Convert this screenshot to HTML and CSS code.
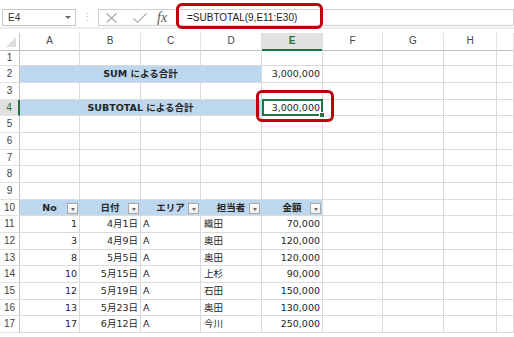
FILE: index.html
```html
<!DOCTYPE html>
<html lang="ja">
<head>
    <meta charset="UTF-8">
    <title>SUBTOTAL</title>
    <link rel="stylesheet" href="styles.css">
</head>
<body>

    <!-- Formula bar -->
    <div class="toolbar">
        <div class="namebox"><span>E4</span><span class="arrow"></span></div>
        <div class="sep">&#8942;</div>
        <div class="fxbox">
            <svg class="ico-x" width="11" height="10" viewBox="0 0 11 10"><path d="M0.5 0.5L10.5 9.5M10.5 0.5L0.5 9.5" stroke="#a8a8a8" stroke-width="1.1" fill="none"/></svg>
            <svg class="ico-ok" width="14" height="10" viewBox="0 0 14 10"><path d="M0.5 5.5L4.5 9.3L13.5 0.5" stroke="#a8a8a8" stroke-width="1.1" fill="none"/></svg>
            <span class="fx">fx</span>
        </div>
        <div class="formula">=SUBTOTAL(9,E11:E30)</div>
    </div>

    <!-- Sheet -->
    <div class="sheet">
        <div class="row head">
            <div class="corner"></div>
            <div class="ch">A</div><div class="ch">B</div><div class="ch">C</div><div class="ch">D</div>
            <div class="ch on">E</div><div class="ch">F</div><div class="ch">G</div><div class="ch">H</div><div class="ch"></div>
        </div>

        <div class="row">
            <div class="rh">1</div>
            <div class="c"></div><div class="c"></div><div class="c"></div><div class="c"></div><div class="c"></div><div class="c"></div><div class="c"></div><div class="c"></div><div class="c"></div>
        </div>
        <div class="row">
            <div class="rh">2</div>
            <div class="c fill bold mid merge">SUM による合計</div>
            <div class="c num">3,000,000</div><div class="c"></div><div class="c"></div><div class="c"></div><div class="c"></div>
        </div>
        <div class="row">
            <div class="rh">3</div>
            <div class="c"></div><div class="c"></div><div class="c"></div><div class="c"></div><div class="c"></div><div class="c"></div><div class="c"></div><div class="c"></div><div class="c"></div>
        </div>
        <div class="row">
            <div class="rh on">4</div>
            <div class="c fill bold mid merge">SUBTOTAL による合計</div>
            <div class="c num sel">3,000,000</div><div class="c"></div><div class="c"></div><div class="c"></div><div class="c"></div>
        </div>
        <div class="row">
            <div class="rh">5</div>
            <div class="c"></div><div class="c"></div><div class="c"></div><div class="c"></div><div class="c"></div><div class="c"></div><div class="c"></div><div class="c"></div><div class="c"></div>
        </div>
        <div class="row">
            <div class="rh">6</div>
            <div class="c"></div><div class="c"></div><div class="c"></div><div class="c"></div><div class="c"></div><div class="c"></div><div class="c"></div><div class="c"></div><div class="c"></div>
        </div>
        <div class="row">
            <div class="rh">7</div>
            <div class="c"></div><div class="c"></div><div class="c"></div><div class="c"></div><div class="c"></div><div class="c"></div><div class="c"></div><div class="c"></div><div class="c"></div>
        </div>
        <div class="row">
            <div class="rh">8</div>
            <div class="c"></div><div class="c"></div><div class="c"></div><div class="c"></div><div class="c"></div><div class="c"></div><div class="c"></div><div class="c"></div><div class="c"></div>
        </div>
        <div class="row">
            <div class="rh">9</div>
            <div class="c"></div><div class="c"></div><div class="c"></div><div class="c"></div><div class="c"></div><div class="c"></div><div class="c"></div><div class="c"></div><div class="c"></div>
        </div>

        <!-- Table header -->
        <div class="row">
            <div class="rh">10</div>
            <div class="c fill bold mid">No<span class="flt"></span></div>
            <div class="c fill bold mid">日付<span class="flt"></span></div>
            <div class="c fill bold mid">エリア<span class="flt"></span></div>
            <div class="c fill bold mid">担当者<span class="flt"></span></div>
            <div class="c fill bold mid last">金額<span class="flt"></span></div>
            <div class="c"></div><div class="c"></div><div class="c"></div><div class="c"></div>
        </div>

        <div class="row">
            <div class="rh">11</div>
            <div class="c num">1</div><div class="c num">4月1日</div><div class="c">A</div><div class="c name">織田</div><div class="c num">70,000</div>
            <div class="c"></div><div class="c"></div><div class="c"></div><div class="c"></div>
        </div>
        <div class="row">
            <div class="rh">12</div>
            <div class="c num">3</div><div class="c num">4月9日</div><div class="c">A</div><div class="c name">奥田</div><div class="c num">120,000</div>
            <div class="c"></div><div class="c"></div><div class="c"></div><div class="c"></div>
        </div>
        <div class="row">
            <div class="rh">13</div>
            <div class="c num">8</div><div class="c num">5月5日</div><div class="c">A</div><div class="c name">奥田</div><div class="c num">120,000</div>
            <div class="c"></div><div class="c"></div><div class="c"></div><div class="c"></div>
        </div>
        <div class="row">
            <div class="rh">14</div>
            <div class="c num">10</div><div class="c num">5月15日</div><div class="c">A</div><div class="c name">上杉</div><div class="c num">90,000</div>
            <div class="c"></div><div class="c"></div><div class="c"></div><div class="c"></div>
        </div>
        <div class="row">
            <div class="rh">15</div>
            <div class="c num">12</div><div class="c num">5月19日</div><div class="c">A</div><div class="c name">石田</div><div class="c num">150,000</div>
            <div class="c"></div><div class="c"></div><div class="c"></div><div class="c"></div>
        </div>
        <div class="row">
            <div class="rh">16</div>
            <div class="c num">13</div><div class="c num">5月23日</div><div class="c">A</div><div class="c name">奥田</div><div class="c num">130,000</div>
            <div class="c"></div><div class="c"></div><div class="c"></div><div class="c"></div>
        </div>
        <div class="row">
            <div class="rh">17</div>
            <div class="c num">17</div><div class="c num">6月12日</div><div class="c">A</div><div class="c name">今川</div><div class="c num">250,000</div>
            <div class="c"></div><div class="c"></div><div class="c"></div><div class="c"></div>
        </div>
    </div>

    <!-- Red call-outs -->
    <div class="callout formula-mark"></div>
    <div class="callout cell-mark"></div>

</body>
</html>
```

FILE: styles.css
```css
body {
    margin: 0;
    background-color: #fff;
    font-family: "DejaVu Sans", "Noto Sans CJK JP", sans-serif;
    color: #262626;
    position: relative;
    height: 337px;
    overflow: hidden;
}

/* formula bar */
.toolbar {
    display: flex;
    align-items: flex-start;
    height: 29px;
    box-sizing: border-box;
    padding: 9px 0 0 2px;
    border-bottom: 2px solid #ececec;
}

.namebox {
    width: 74px;
    height: 17px;
    box-sizing: border-box;
    border: 1px solid #c6c6c6;
    display: flex;
    align-items: center;
    justify-content: space-between;
    padding: 0 4px 0 5px;
    font: 10px "Liberation Sans", sans-serif;
    color: #333;
}

.namebox .arrow {
    border-left: 3px solid transparent;
    border-right: 3px solid transparent;
    border-top: 3px solid #666;
}

.sep {
    width: 22px;
    text-align: center;
    color: #b5b5b5;
    font: 11px "Liberation Sans", sans-serif;
    line-height: 17px;
}

.fxbox {
    display: flex;
    align-items: center;
    width: 79px;
    height: 17px;
    box-sizing: border-box;
    border: 1px solid #d0d0d0;
    border-right: none;
    padding-left: 7px;
}

.ico-x {
    margin-right: 16px;
}

.ico-ok {
    margin-right: 10px;
}

.fx {
    font: italic 14px "Liberation Serif", serif;
    color: #555;
    line-height: 14px;
}

.formula {
    flex: 1;
    height: 17px;
    box-sizing: border-box;
    border: 1px solid #d0d0d0;
    padding-left: 9px;
    font: 10px "Liberation Sans", sans-serif;
    line-height: 15px;
    color: #222;
}

/* sheet */
.sheet {
    margin-top: 4px;
}

.row {
    display: grid;
    grid-template-columns: 20px 60px 61px 60px 61px 61px 60px 61px 53px 1fr;
    height: 16.67px;
}

.c, .rh, .ch, .corner {
    box-sizing: border-box;
    border-bottom: 1px solid #dadada;
    border-right: 1px solid #dadada;
    white-space: nowrap;
    position: relative;
}

.c {
    font-size: 9.5px;
    line-height: 15.67px;
    padding: 0 2px;
}

.rh {
    border-right-color: #c0c0c0;
    border-bottom-color: #e2e2e2;
    text-align: center;
    font: 10px "Liberation Sans", sans-serif;
    line-height: 15.67px;
    color: #444;
}

.rh.on {
    background-color: #e1e1e1;
    color: #217346;
    border-right: 2px solid #217346;
}

.head .ch {
    border-bottom-color: #c0c0c0;
    border-right-color: #e2e2e2;
    text-align: center;
    font: 10px "Liberation Sans", sans-serif;
    line-height: 15.67px;
    color: #444;
}

.head .ch.on {
    background-color: #e1e1e1;
    color: #217346;
    font-weight: bold;
    border-bottom: 2px solid #217346;
}

.corner {
    border-bottom-color: #c0c0c0;
    border-right-color: #c0c0c0;
}

.corner::after {
    content: "";
    position: absolute;
    right: 3px;
    bottom: 3px;
    border-left: 10px solid transparent;
    border-bottom: 10px solid #dcdcdc;
}

.num {
    text-align: right;
}

.mid {
    text-align: center;
}

.bold {
    font-weight: bold;
}

.name {
    padding-left: 3px;
}

.fill {
    background-color: #bdd7ee;
    border-right-color: #bdd7ee;
}

.fill.last {
    border-right-color: #dadada;
}

.merge {
    grid-column: span 4;
    border-right-color: #dadada;
}

/* filter button */
.flt {
    position: absolute;
    right: 1px;
    top: 3px;
    width: 11px;
    height: 11px;
    box-sizing: border-box;
    border: 1px solid #a9a9a9;
    background: linear-gradient(#fff, #ededed);
}

.flt::after {
    content: "";
    position: absolute;
    left: 2.5px;
    top: 4px;
    border-left: 2.5px solid transparent;
    border-right: 2.5px solid transparent;
    border-top: 3px solid #6a6a6a;
}

/* active cell */
.sel::after {
    content: "";
    position: absolute;
    left: 0;
    top: -1px;
    right: -1px;
    bottom: -1px;
    border: 2px solid #217346;
}

.sel::before {
    content: "";
    position: absolute;
    right: -3px;
    bottom: -3px;
    width: 4px;
    height: 4px;
    background-color: #217346;
    border: 1px solid #fff;
    z-index: 1;
}

/* annotations */
.callout {
    position: absolute;
    border: 3px solid #c0000c;
    border-radius: 6px;
    box-sizing: border-box;
}

.formula-mark {
    left: 176px;
    top: 3px;
    width: 147px;
    height: 26px;
}

.cell-mark {
    left: 256px;
    top: 90px;
    width: 78px;
    height: 32px;
}
```
